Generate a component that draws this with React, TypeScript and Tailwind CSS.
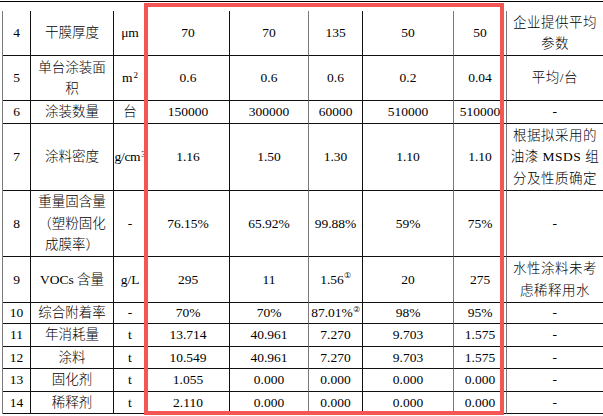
import React from "react";

const Sup = ({ children }: { children: React.ReactNode }) => (
  <sup className="text-[9px] ml-px">{children}</sup>
);
const Circ = ({ children }: { children: React.ReactNode }) => (
  <sup className="text-[8px] -top-[0.7em] font-['DejaVu_Sans',sans-serif]">{children}</sup>
);

const Lines = ({ lines }: { lines: React.ReactNode[] }) => (
  <div className="flex flex-col items-center">
    {lines.map((l, i) => (
      <span key={i} className="block whitespace-nowrap">
        {l}
      </span>
    ))}
  </div>
);

const rows: React.ReactNode[][] = [
  ["4", "干膜厚度", "μm", "70", "70", "135", "50", "50", <Lines lines={["企业提供平均", "参数"]} />],
  [
    "5",
    <Lines lines={["单台涂装面", "积"]} />,
    <span>
      m<Sup>2</Sup>
    </span>,
    "0.6",
    "0.6",
    "0.6",
    "0.2",
    "0.04",
    "平均/台",
  ],
  ["6", "涂装数量", "台", "150000", "300000", "60000", "510000", "510000", "-"],
  [
    "7",
    "涂料密度",
    <span className="tracking-[-0.3px]">
      g/cm<Sup>3</Sup>
    </span>,
    "1.16",
    "1.50",
    "1.30",
    "1.10",
    "1.10",
    <Lines lines={["根据拟采用的", "油漆 MSDS 组", "分及性质确定"]} />,
  ],
  ["8", <Lines lines={["重量固含量", "（塑粉固化", "成膜率）"]} />, "-", "76.15%", "65.92%", "99.88%", "59%", "75%", "-"],
  [
    "9",
    "VOCs 含量",
    "g/L",
    "295",
    "11",
    <span>
      1.56<Circ>①</Circ>
    </span>,
    "20",
    "275",
    <Lines lines={["水性涂料未考", "虑稀释用水"]} />,
  ],
  [
    "10",
    "综合附着率",
    "-",
    "70%",
    "70%",
    <span>
      87.01%<Circ>②</Circ>
    </span>,
    "98%",
    "95%",
    "-",
  ],
  ["11", "年消耗量", "t", "13.714", "40.961", "7.270", "9.703", "1.575", "-"],
  ["12", "涂料", "t", "10.549", "40.961", "7.270", "9.703", "1.575", "-"],
  ["13", "固化剂", "t", "1.055", "0.000", "0.000", "0.000", "0.000", "-"],
  ["14", "稀释剂", "t", "2.110", "0.000", "0.000", "0.000", "0.000", "-"],
];

const rightBorder = [
  "border-r border-r-[#111]",
  "border-r border-r-[#111]",
  "border-r border-r-[#111]",
  "border-r border-r-[#111]",
  "border-r border-r-[#7a7a7a]",
  "border-r border-r-[#111]",
  "border-r border-r-[#7a7a7a]",
  "border-r border-r-[#7a7a7a]",
  "tracking-[0.5px]",
];

export default function App() {
  return (
    <div className="relative w-[603px] h-[416px] overflow-hidden bg-white text-black font-light font-[family-name:'Liberation_Serif','Noto_Sans_CJK_SC',serif] text-[13.5px] leading-[21.5px]">
      <div className="mt-px h-px w-full bg-black" />
      <div className="mt-[9px] ml-[2px] border-l border-l-[#7a7a7a] grid grid-cols-[28px_83px_33px_83px_79px_54px_91px_53px_96px] grid-rows-[45px_45px_23px_67px_66px_46px_21px_23px_22px_23px_22px]">
        {rows.map((r, ri) =>
          r.map((c, ci) => (
            <div
              key={`${ri}-${ci}`}
              className={`flex items-center justify-center text-center whitespace-nowrap border-b border-b-[#111] ${rightBorder[ci]}`}
            >
              {c}
            </div>
          ))
        )}
      </div>
      <div className="pointer-events-none absolute left-[144px] top-[3px] h-[412px] w-[360px] border-4 border-[#f45656]" />
    </div>
  );
}
